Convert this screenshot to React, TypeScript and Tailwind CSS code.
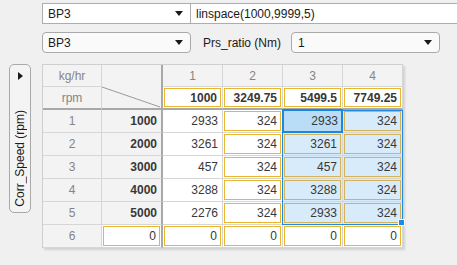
import React from "react";

const Arrow = () => (
  <svg width="8" height="5" viewBox="0 0 8 5" className="shrink-0">
    <path d="M0 0 L8 0 L4 5 Z" fill="#1a1a1a" />
  </svg>
);

type CellProps = {
  children?: React.ReactNode;
  bg?: string;
  yellow?: boolean;
  bold?: boolean;
  center?: boolean;
  gray?: boolean;
  thickR?: boolean;
  thickB?: boolean;
  blue?: boolean;
};

function Cell({ children, yellow, bold, center, gray, thickR, thickB, blue, bg }: CellProps) {
  const border = [
    "border-[#d6d6d6]",
    thickR ? "border-r-2 border-r-[#a8a8a8]" : "border-r",
    thickB ? "border-b-2 border-b-[#a8a8a8]" : "border-b",
  ].join(" ");
  const bgc = blue ? "bg-[#d7ebfb]" : bg === "gray" ? "bg-[#f3f3f3]" : "bg-white";
  const text = [
    gray ? "text-[#858585]" : "text-[#383838]",
    bold ? "font-bold" : "",
    center ? "justify-center" : "justify-end pr-[3px]",
  ].join(" ");
  return (
    <div className={`flex ${border} ${bgc}`}>
      {yellow ? (
        <div
          className={`m-[1px] flex flex-1 items-center border ${
            blue ? "border-[#d2b35c]" : "border-[#ecb530]"
          } ${text}`}
        >
          {children}
        </div>
      ) : (
        <div className={`flex flex-1 items-center ${text} ${center ? "" : "pr-[4px]"}`}>{children}</div>
      )}
    </div>
  );
}

const rows: [string, string, string, string, string, string][] = [
  ["1", "1000", "2933", "324", "2933", "324"],
  ["2", "2000", "3261", "324", "3261", "324"],
  ["3", "3000", "457", "324", "457", "324"],
  ["4", "4000", "3288", "324", "3288", "324"],
  ["5", "5000", "2276", "324", "2933", "324"],
  ["6", "0", "0", "0", "0", "0"],
];

export default function App() {
  return (
    <div className="w-[457px] h-[265px] overflow-hidden bg-[#f0f0f0] font-['Liberation_Sans',Arial,sans-serif] text-[12px] text-[#1a1a1a]">
      {/* Row 1 */}
      <div className="flex pt-[3px] pl-[42px]">
        <div className="flex h-[21px] w-[149px] items-center justify-between border border-[#abadb3] bg-white pl-[5px] pr-[7px]">
          <span>BP3</span>
          <Arrow />
        </div>
        <div className="flex h-[21px] flex-1 items-center border border-l-0 border-r-0 border-[#abadb3] bg-white pl-[5px]">
          linspace(1000,9999,5)
        </div>
      </div>
      {/* Row 2 */}
      <div className="mt-[8px] flex items-center pl-[42px]">
        <div className="flex h-[21px] w-[149px] items-center justify-between rounded-[4px] border border-[#a9a9a9] bg-[#fafafa] pl-[5px] pr-[7px]">
          <span>BP3</span>
          <Arrow />
        </div>
        <span className="ml-[12px] w-[88px]">Prs_ratio (Nm)</span>
        <div className="flex h-[21px] w-[149px] items-center justify-between rounded-[4px] border border-[#a9a9a9] bg-[#fafafa] pl-[6px] pr-[7px]">
          <span>1</span>
          <Arrow />
        </div>
      </div>
      {/* Row 3 */}
      <div className="mt-[11px] flex items-start">
        <div className="ml-[9px] flex h-[149px] w-[22px] flex-col items-center justify-between rounded-[5px] border border-[#a9a9a9] bg-[#f4f4f4] pt-[7px] pb-[5px]">
          <svg width="5" height="8" viewBox="0 0 5 8">
            <path d="M0 0 L5 4 L0 8 Z" fill="#1a1a1a" />
          </svg>
          <span className="rotate-180 whitespace-nowrap leading-[14px] [writing-mode:vertical-rl]">Corr_Speed (rpm)</span>
        </div>
        <div className="relative ml-[11px] border-l border-t border-[#cfcfcf] shadow-[2px_2px_2px_rgba(0,0,0,0.13)]">
          <div className="grid grid-cols-[59px_61px_60px_60px_60px_60px] grid-rows-[22px_23px_repeat(6,23px)]">
            {/* header row 1 */}
            <Cell bg="gray" gray center>kg/hr</Cell>
            <div className="row-span-2 border-r-2 border-b-2 border-r-[#a8a8a8] border-b-[#a8a8a8] bg-[#f3f3f3]">
              <svg width="59" height="43" viewBox="0 0 59 43" className="block">
                <line x1="0" y1="22" x2="58" y2="42" stroke="#9a9a9a" strokeWidth="1" />
              </svg>
            </div>
            {["1", "2", "3", "4"].map((h) => (
              <Cell key={h} bg="gray" gray center>
                {h}
              </Cell>
            ))}
            {/* header row 2 */}
            <Cell bg="gray" gray center thickB>rpm</Cell>
            {["1000", "3249.75", "5499.5", "7749.25"].map((v) => (
              <Cell key={v} yellow bold thickB>
                {v}
              </Cell>
            ))}
            {/* data rows */}
            {rows.map((r, i) => {
              const last = i === 5;
              return (
                <React.Fragment key={i}>
                  <Cell bg="gray" gray center>
                    {r[0]}
                  </Cell>
                  <Cell bg={last ? undefined : "gray"} bold={!last} thickR yellow={last}>
                    {r[1]}
                  </Cell>
                  <Cell yellow={last}>{r[2]}</Cell>
                  <Cell yellow>{r[3]}</Cell>
                  {i === 0 ? (
                    <div className="flex border-r border-b border-[#d6d6d6] bg-[#b9ddf7]">
                      <div className="flex flex-1 items-center justify-end pr-[4px] text-[#383838]">{r[4]}</div>
                    </div>
                  ) : (
                    <Cell yellow blue={!last}>
                      {r[4]}
                    </Cell>
                  )}
                  <Cell yellow blue={!last}>
                    {r[5]}
                  </Cell>
                </React.Fragment>
              );
            })}
          </div>
          {/* selection overlays */}
          <div className="pointer-events-none absolute left-[239px] top-[45px] h-[115px] w-[121px] border border-[#1f8ae4]" />
          <div className="pointer-events-none absolute left-[239px] top-[44px] h-[24px] w-[61px] border-2 border-[#1a86e6]" />
          <div className="pointer-events-none absolute left-[355px] top-[154px] h-[7px] w-[7px] border border-white bg-[#1a8ae8]" />
        </div>
      </div>
    </div>
  );
}
